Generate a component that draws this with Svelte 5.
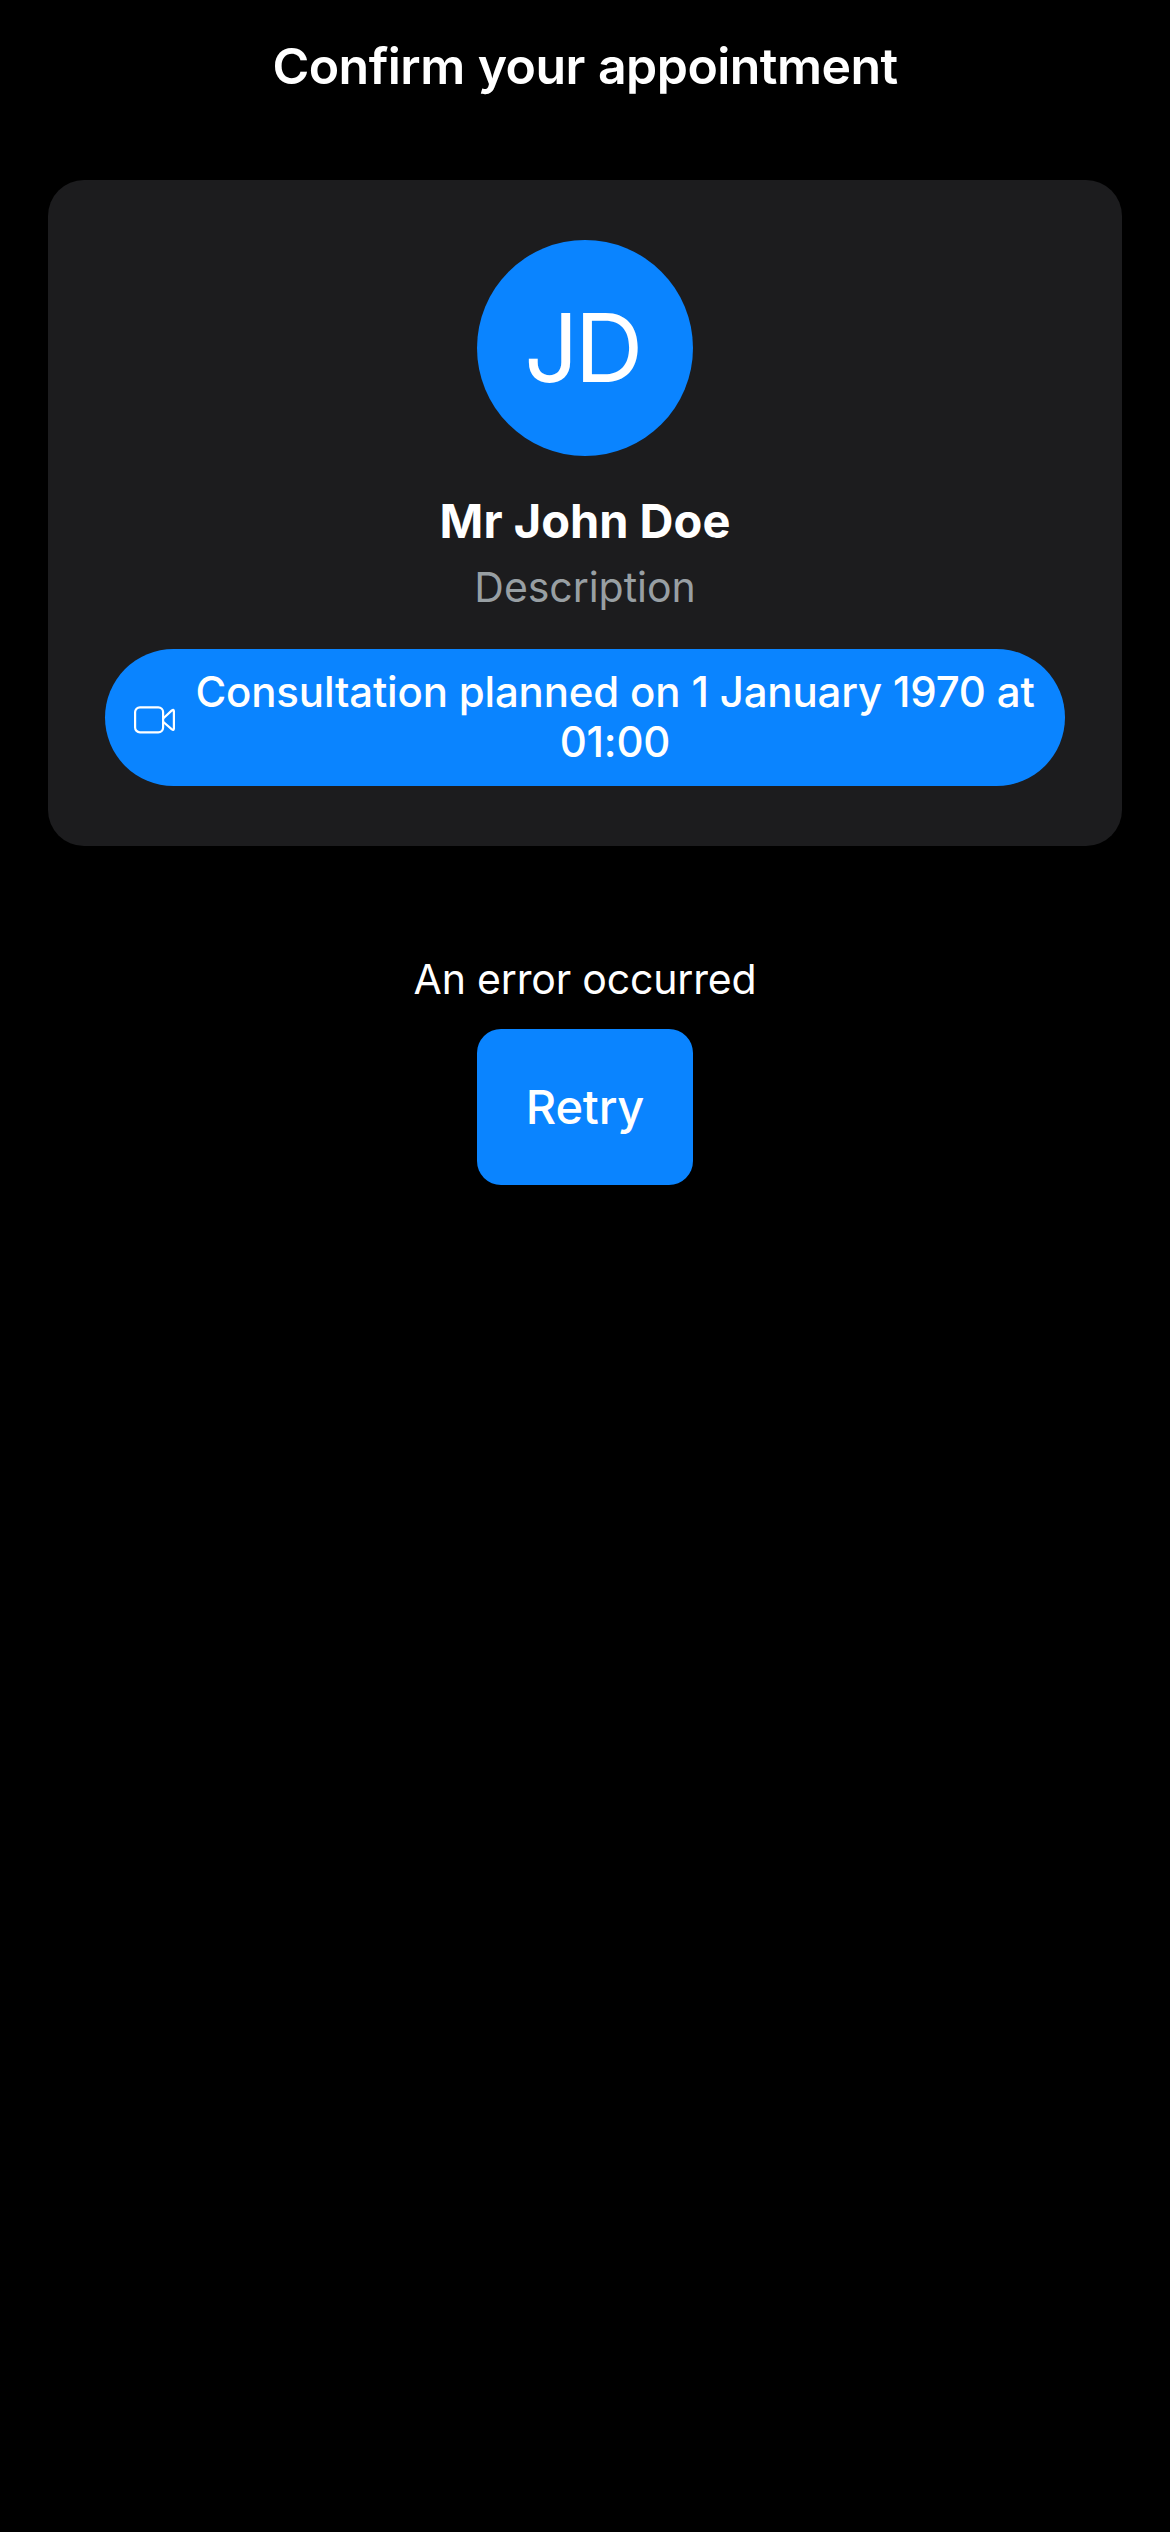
<script>
  const doctor = { initials: 'JD', name: 'Mr John Doe', description: 'Description' };
  const schedule = 'Consultation planned on 1 January 1970 at 01:00';
</script>

<main class="screen">
  <header class="bar">
    <h1 class="title">Confirm your appointment</h1>
  </header>

  <section class="card">
    <div class="avatar"><span class="initials">{doctor.initials}</span></div>
    <h2 class="name">{doctor.name}</h2>
    <p class="description">{doctor.description}</p>
    <div class="pill">
      <svg class="camera" viewBox="0 0 42 28" fill="none" stroke="#fff" stroke-width="2.2" stroke-linejoin="round">
        <rect x="1.1" y="1.3" width="28" height="25" rx="4.8" />
        <path d="M29.4 12.2 37.6 4.6Q39.8 2.8 39.9 5V22.6Q39.8 24.8 37.6 23.2L29.4 16" />
      </svg>
      <span class="schedule">{schedule}</span>
    </div>
  </section>

  <section class="error">
    <p class="message">An error occurred</p>
    <button class="retry" type="button"><span>Retry</span></button>
  </section>
</main>

<style>
  :global(body) {
    margin: 0;
    background: #000;
  }

  .screen {
    box-sizing: border-box;
    min-height: 2532px;
    padding: 0 48px;
    background: #000;
    color: #fff;
    font-family: Inter, 'Liberation Sans', sans-serif;
    font-kerning: normal;
  }

  h1, h2, p {
    margin: 0;
  }

  .bar {
    display: flex;
    align-items: center;
    justify-content: center;
    height: 132px;
    margin-bottom: 48px;
  }

  .title {
    font-size: 50px;
    line-height: 60px;
    font-weight: 600;
    letter-spacing: -0.55px;
    word-spacing: 1px;
    white-space: nowrap;
  }

  .card {
    box-sizing: border-box;
    display: flex;
    flex-direction: column;
    align-items: center;
    height: 666px;
    padding: 60px 57px;
    border-radius: 36px;
    background: #1c1c1e;
  }

  .avatar {
    display: flex;
    align-items: center;
    justify-content: center;
    width: 216px;
    height: 216px;
    border-radius: 50%;
    background: #0a84ff;
  }

  .initials {
    margin-right: 6px;
    font-size: 95px;
    line-height: 114px;
    letter-spacing: -3.6px;
  }

  .name {
    margin-top: 36px;
    font-size: 47px;
    line-height: 58px;
    font-weight: 700;
    white-space: nowrap;
  }

  .description {
    margin-top: 12px;
    font-size: 41px;
    line-height: 50px;
    letter-spacing: -0.05px;
    color: #989fa3;
  }

  .pill {
    box-sizing: border-box;
    display: flex;
    align-items: center;
    gap: 18px;
    width: 960px;
    height: 137px;
    margin-top: 37px;
    padding: 0 29px;
    border-radius: 69px;
    background: #0a84ff;
  }

  .camera {
    flex: none;
    width: 42px;
    height: 28px;
    margin-top: 4px;
  }

  .schedule {
    flex: 1;
    margin-bottom: 1px;
    font-size: 42px;
    line-height: 50px;
    font-weight: 500;
    letter-spacing: -0.175px;
    text-align: center;
  }

  .error {
    display: flex;
    flex-direction: column;
    align-items: center;
    padding-top: 108px;
  }

  .message {
    font-size: 41px;
    line-height: 50px;
    letter-spacing: -0.17px;
  }

  .retry {
    width: 216px;
    height: 156px;
    margin-top: 25px;
    padding: 0;
    border: 0;
    border-radius: 24px;
    background: #0a84ff;
    color: #fff;
    font: 500 47px/58px Inter, 'Liberation Sans', sans-serif;
    letter-spacing: -0.2px;
  }
</style>
